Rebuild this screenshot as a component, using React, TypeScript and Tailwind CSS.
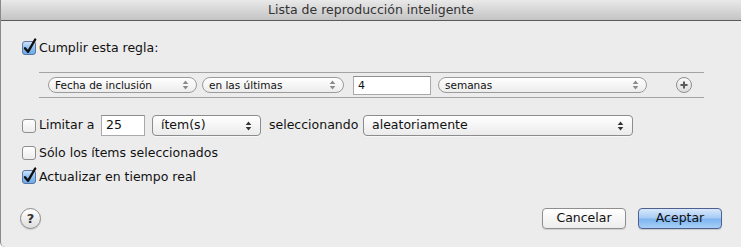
import React from "react";

const font = { fontFamily: '"DejaVu Sans", "Liberation Sans", Arial, sans-serif' };

function CheckBox({ checked }: { checked: boolean }) {
  return (
    <svg width="16" height="16" viewBox="0 0 16 16" className="shrink-0 overflow-visible">
      <defs>
        <linearGradient id="cbOn" x1="0" y1="0" x2="0" y2="1">
          <stop offset="0" stopColor="#d3e6fb" />
          <stop offset="0.5" stopColor="#8dbdf1" />
          <stop offset="1" stopColor="#6aa9ee" />
        </linearGradient>
        <linearGradient id="cbOff" x1="0" y1="0" x2="0" y2="1">
          <stop offset="0" stopColor="#ffffff" />
          <stop offset="1" stopColor="#ececec" />
        </linearGradient>
      </defs>
      <rect
        x="1.5"
        y="1.5"
        width="13"
        height="13"
        rx="2.5"
        fill={checked ? "url(#cbOn)" : "url(#cbOff)"}
        stroke={checked ? "#5b77a0" : "#8e8e8e"}
      />
      {checked && (
        <path
          d="M4 8.2 L7 11.8 L14.2 -0.5"
          fill="none"
          stroke="#111"
          strokeWidth="2.4"
          strokeLinecap="round"
          strokeLinejoin="round"
        />
      )}
    </svg>
  );
}

function Arrows({ dark }: { dark?: boolean }) {
  const c = dark ? "#333" : "#8a8a8a";
  return (
    <svg width="7" height="10" viewBox="0 0 7 10" className="shrink-0">
      <path d="M3.5 0.5 L6.3 4 H0.7 Z" fill={c} />
      <path d="M3.5 9.5 L6.3 6 H0.7 Z" fill={c} />
    </svg>
  );
}

function MiniPopup({ label, width }: { label: string; width: number }) {
  return (
    <div
      className="flex h-[16px] items-center justify-between rounded-full border border-[#9b9b9b] bg-gradient-to-b from-[#ffffff] to-[#ececec] pl-[6px] pr-[7px] text-[10.5px] text-[#111]"
      style={{ width }}
    >
      <span className="leading-none">{label}</span>
      <Arrows />
    </div>
  );
}

function Popup({ label, width }: { label: string; width: number }) {
  return (
    <div
      className="flex h-[21px] items-center justify-between rounded-[4px] border border-[#8c8c8c] bg-gradient-to-b from-[#ffffff] to-[#ebebeb] pl-[8px] pr-[8px] text-[12.5px] text-[#111] shadow-[0_1px_0_rgba(255,255,255,0.6)]"
      style={{ width }}
    >
      <span className="leading-none">{label}</span>
      <Arrows dark />
    </div>
  );
}

function Field({ value, width, height }: { value: string; width: number; height: number }) {
  return (
    <div
      className="flex items-center border border-[#a9a9a9] border-t-[#8e8e8e] bg-white pl-[4px] text-[#111]"
      style={{ width, height }}
    >
      <span className="leading-none">{value}</span>
    </div>
  );
}

export default function App() {
  return (
    <div
      className="relative flex h-[247px] w-[741px] flex-col overflow-hidden rounded-bl-[5px] border-l border-[#8a8a8a] bg-[#ececec] text-[12.5px] text-[#111]"
      style={font}
    >
      {/* title bar */}
      <div className="flex h-[21px] shrink-0 items-center justify-center border-b border-[#5a5a5a] bg-gradient-to-b from-[#e9e9e9] to-[#c4c4c4] text-[12.5px] text-[#333]">
        Lista de reproducción inteligente
      </div>

      {/* Cumplir */}
      <div className="ml-[20px] mt-[19px] flex h-[16px] items-center gap-[2px]">
        <CheckBox checked />
        <span className="leading-none">Cumplir esta regla:</span>
      </div>

      {/* rule box */}
      <div className="ml-[38px] mt-[16px] flex h-[26px] w-[665px] items-center border-y border-[#a3a3a3] pl-[9px]">
        <MiniPopup label="Fecha de inclusión" width={149} />
        <div className="ml-[5px]">
          <MiniPopup label="en las últimas" width={142} />
        </div>
        <div className="ml-[9px] text-[11px]">
          <Field value="4" width={78} height={19} />
        </div>
        <div className="ml-[7px]">
          <MiniPopup label="semanas" width={209} />
        </div>
        <div className="ml-[29px] flex h-[16px] w-[16px] items-center justify-center rounded-full border border-[#8f8f8f] bg-gradient-to-b from-[#fafafa] to-[#dcdcdc]">
          <svg width="10" height="10" viewBox="0 0 10 10">
            <path d="M5 1.5 V8.5 M1.5 5 H8.5" stroke="#5a5a5a" strokeWidth="2" />
          </svg>
        </div>
      </div>

      {/* Limitar */}
      <div className="ml-[20px] mt-[17px] flex h-[21px] items-center">
        <CheckBox checked={false} />
        <span className="ml-[2px] w-[56px] whitespace-nowrap leading-none">Limitar a</span>
        <div className="ml-[6px]">
          <Field value="25" width={44} height={21} />
        </div>
        <div className="ml-[7px]">
          <Popup label="ítem(s)" width={109} />
        </div>
        <span className="ml-[8px] w-[89px] whitespace-nowrap leading-none">seleccionando</span>
        <div className="ml-[5px]">
          <Popup label="aleatoriamente" width={270} />
        </div>
      </div>

      {/* Solo */}
      <div className="ml-[20px] mt-[9px] flex h-[16px] items-center gap-[2px]">
        <CheckBox checked={false} />
        <span className="leading-none">Sólo los ítems seleccionados</span>
      </div>

      {/* Actualizar */}
      <div className="ml-[20px] mt-[8px] flex h-[16px] items-center gap-[2px]">
        <CheckBox checked />
        <span className="leading-none">Actualizar en tiempo real</span>
      </div>

      {/* bottom */}
      <div className="ml-[19px] mt-[23px] flex h-[21px] items-center">
        <div className="flex h-[21px] w-[21px] items-center justify-center rounded-full border border-[#8c8c8c] bg-gradient-to-b from-[#ffffff] to-[#dedede] text-[13px] font-bold text-[#333] shadow-[0_1px_1px_rgba(0,0,0,0.15)]">
          <span className="leading-none">?</span>
        </div>
        <div className="ml-auto mr-[19px] flex gap-[12px]">
          <div className="flex h-[21px] w-[84px] items-center justify-center rounded-[4px] border border-[#8e8e8e] bg-gradient-to-b from-[#ffffff] to-[#ededed] shadow-[0_1px_1px_rgba(0,0,0,0.12)]">
            Cancelar
          </div>
          <div className="flex h-[21px] w-[84px] items-center justify-center rounded-[4px] border border-[#4f5f8f] bg-[linear-gradient(to_bottom,#d8e8fb_0%,#a9cdf5_45%,#7fb5f0_55%,#a6d0f8_100%)] shadow-[0_1px_1px_rgba(0,0,0,0.15)]">
            Aceptar
          </div>
        </div>
      </div>
    </div>
  );
}
